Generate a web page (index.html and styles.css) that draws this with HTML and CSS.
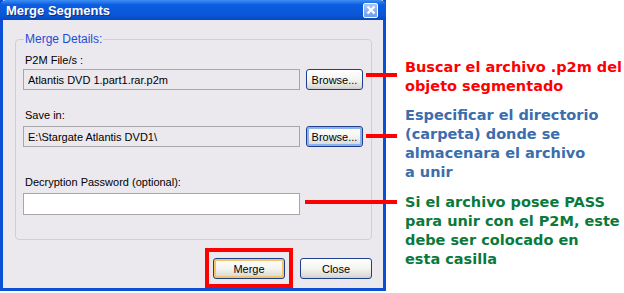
FILE: index.html
```html
<!DOCTYPE html>
<html>
<head>
	<title>Merge Segments</title>
	<link rel="stylesheet" href="styles.css">
</head>
<body>
	<div class="stage">
		<div class="window">
			<div class="titlebar">
				<span class="title">Merge Segments</span>
				<span class="close">
					<svg width="10" height="10" viewBox="0 0 10 10"><path d="M1.5 1.5 L8.5 8.5 M8.5 1.5 L1.5 8.5" stroke="#fff" stroke-width="2.2"/></svg>
				</span>
			</div>
			<div class="body">
				<fieldset class="group">
					<legend>Merge Details:</legend>
					<div class="label first">P2M File/s :</div>
					<div class="row">
						<input class="txt" type="text" value="Atlantis DVD 1.part1.rar.p2m" disabled>
						<button class="btn">Browse...</button>
					</div>
					<div class="label">Save in:</div>
					<div class="row">
						<input class="txt" type="text" value="E:\Stargate Atlantis DVD1\" disabled>
						<button class="btn focus">Browse...</button>
					</div>
					<div class="label pass">Decryption Password (optional):</div>
					<div class="row">
						<input class="txt white" type="text">
					</div>
				</fieldset>
				<div class="actions">
					<button class="btn wide default">Merge</button>
					<button class="btn wide">Close</button>
				</div>
			</div>
		</div>

		<div class="notes">
			<p class="red">Buscar el archivo .p2m del<br>objeto segmentado</p>
			<p class="blue">Especificar el directorio<br>(carpeta) donde se<br>almacenara el archivo<br>a unir</p>
			<p class="green">Si el archivo posee PASS<br>para unir con el P2M, este<br>debe ser colocado en<br>esta casilla</p>
		</div>

		<!-- lineas rojas que señalan cada campo -->
		<div class="mark line1"></div>
		<div class="mark line2"></div>
		<div class="mark line3"></div>
		<div class="box"></div>
	</div>
</body>
</html>
```

FILE: styles.css
```css
body {
	margin: 0;
	background: #fff;
	font-family: "Liberation Sans", Arial, sans-serif;
}

.stage {
	position: relative;
	display: flex;
	width: 624px;
	height: 293px;
}

.window {
	flex-shrink: 0;
	width: 386px;
	height: 291px;
	box-sizing: border-box;
	border: 3px solid #0A4FD6;
	border-top: none;
	background: #ECE9EE;
	display: flex;
	flex-direction: column;
}

.titlebar {
	height: 20px;
	margin: 0 -3px;
	padding: 0 8px 0 6px;
	display: flex;
	align-items: center;
	justify-content: space-between;
	background: linear-gradient(#3C8EF3, #0B5CDF 25%, #0A57D8 75%, #0848BC);
	border-radius: 6px 6px 0 0;
}

.title {
	color: #fff;
	font-weight: bold;
	font-size: 13px;
	text-shadow: 1px 1px 0 #0A2F88;
}

.close {
	width: 13px;
	height: 13px;
	display: flex;
	align-items: center;
	justify-content: center;
	border: 1px solid #fff;
	border-radius: 2px;
	background: linear-gradient(#A8C8F8, #6E9EEA);
}

.body {
	flex: 1;
	padding: 12px 11px 0 12px;
	display: flex;
	flex-direction: column;
}

.group {
	margin: 0;
	padding: 0 0 0 7px;
	height: 208px;
	box-sizing: border-box;
	border: 1px solid #D4D0C8;
	border-radius: 4px;
	font-size: 11px;
}

.group legend {
	color: #1C4ED4;
	font-size: 12px;
	padding: 0 1px;
	margin-left: 1px;
}

.label {
	color: #000;
	margin: 3px 0 0 2px;
	height: 15px;
	line-height: 15px;
}

.label.first {
	margin-top: 7px;
}

.label + .row {
	margin-top: 3px;
}

.label.first + .row {
	margin-top: 1px;
}

.row {
	display: flex;
	gap: 6px;
	align-items: center;
	margin-bottom: 18px;
}

.pass {
	margin-top: 28px;
}

.pass + .row {
	margin-top: 3px;
}

.txt {
	width: 277px;
	height: 21px;
	box-sizing: border-box;
	border: 1px solid #A7A6AA;
	background: #ECE9EE;
	color: #000;
	font-family: "Liberation Sans", Arial, sans-serif;
	font-size: 11px;
	padding: 0 4px;
	margin: 0;
}

.txt.white {
	background: #fff;
	height: 22px;
}

.btn {
	width: 57px;
	height: 21px;
	box-sizing: border-box;
	border: 1px solid #1F3F8C;
	border-radius: 3px;
	background: linear-gradient(#FFFFFF, #F4F4F0 50%, #DCDCD6 90%, #C9CDD8);
	font-family: "Liberation Sans", Arial, sans-serif;
	font-size: 11px;
	color: #000;
	padding: 0;
}

.btn.focus {
	box-shadow: inset 0 0 0 2px #8DB2F0;
}

.btn.wide {
	width: 72px;
}

.btn.default {
	box-shadow: inset 0 0 0 2px #F5C36A;
}

.actions {
	display: flex;
	justify-content: flex-end;
	gap: 15px;
	margin-top: 18px;
}

.notes {
	padding: 58px 0 0 19px;
	font-family: "DejaVu Sans", Verdana, sans-serif;
	font-weight: bold;
	font-size: 14.5px;
	line-height: 19px;
	white-space: nowrap;
}

.notes p {
	margin: 0;
}

.red {
	color: #FF0000;
}

.blue {
	color: #3C6DAD;
	margin-top: 10px !important;
}

.green {
	color: #0A7A3C;
	margin-top: 11px !important;
}

.mark {
	position: absolute;
	height: 4px;
	background: #FF0000;
}

.line1 {
	left: 366px;
	top: 73px;
	width: 31px;
}

.line2 {
	left: 366px;
	top: 134px;
	width: 31px;
}

.line3 {
	left: 305px;
	top: 200px;
	width: 92px;
}

.box {
	position: absolute;
	left: 205px;
	top: 248px;
	width: 80px;
	height: 32px;
	border: 4px solid #FF0000;
}
```
